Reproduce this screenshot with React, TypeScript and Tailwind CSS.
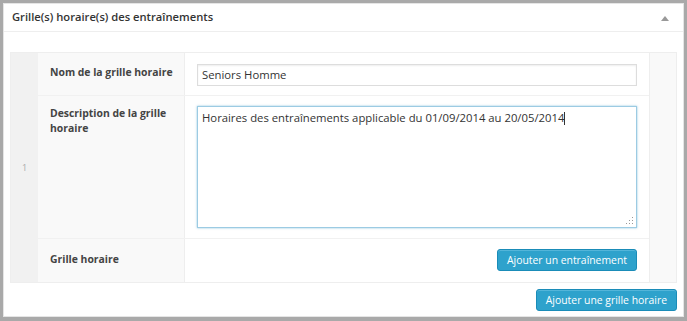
import React from "react";

const font = { fontFamily: '"Open Sans", "Liberation Sans", sans-serif' };

const btn =
  "h-[22px] px-[9px] rounded-[3px] bg-[#2ea2cc] border border-[#1a8cb8] shadow-[inset_0_1px_0_rgba(120,200,230,0.5)] text-white text-[10.4px] leading-none";

export default function App() {
  return (
    <div className="w-[687px] h-[321px] bg-[#a9a9a9] p-[3px] pb-[4px]" style={font}>
      <div className="h-full bg-white border border-[#e5e5e5] flex flex-col text-[#444]">
        <div className="h-[28px] border-b border-[#eeeeee] flex items-center justify-between pl-[8px] pr-[14px]">
          <span className="font-semibold text-[#333] text-[11.2px]">Grille(s) horaire(s) des entraînements</span>
          <svg width="8" height="6" viewBox="0 0 8 6">
            <path d="M0 6 L4 1 L8 6 Z" fill="#999" />
          </svg>
        </div>
        <div className="px-[6px] pt-[20px]">
          <div className="flex border border-[#eeeeee]">
            <div className="w-[27px] bg-[#f1f1f1] flex items-center justify-center text-[9px] text-[#aaa]">1</div>
            <div className="flex-1 flex flex-col">
              <div className="flex h-[43px] border-b border-[#f1f1f1]">
                <div className="w-[147px] bg-[#f9f9f9] border-r border-[#eeeeee] pl-[12px] pt-[12px] font-bold text-[#444] text-[10.4px]">
                  Nom de la grille horaire
                </div>
                <div className="flex-1 px-[12px] pt-[11px]">
                  <div className="h-[22px] border border-[#dddddd] shadow-[inset_0_1px_2px_rgba(0,0,0,0.07)] px-[4px] flex items-center text-[11.3px] text-[#333]">
                    Seniors Homme
                  </div>
                </div>
              </div>
              <div className="flex h-[143px] border-b border-[#f1f1f1]">
                <div className="w-[147px] bg-[#f9f9f9] border-r border-[#eeeeee] pl-[12px] pt-[10px] pr-[8px] font-bold text-[#444] text-[10.4px] leading-[15px]">
                  Description de la grille horaire
                </div>
                <div className="flex-1 px-[12px] pt-[10px]">
                  <div className="relative h-[122px] border border-[#9ccbe3] shadow-[0_0_2px_rgba(30,140,190,0.5)] px-[4px] pt-[3px] text-[11.3px] text-[#333]">
                    Horaires des entraînements applicable du 01/09/2014 au 20/05/2014
                    <span className="inline-block w-px h-[13px] bg-[#333] align-middle" />
                    <svg className="absolute right-[2px] bottom-[2px]" width="8" height="8" viewBox="0 0 8 8">
                      <rect x="6" y="0" width="1" height="1" fill="#999" />
                      <rect x="3" y="3" width="1" height="1" fill="#999" />
                      <rect x="6" y="3" width="1" height="1" fill="#999" />
                      <rect x="0" y="6" width="1" height="1" fill="#999" />
                      <rect x="3" y="6" width="1" height="1" fill="#999" />
                      <rect x="6" y="6" width="1" height="1" fill="#999" />
                    </svg>
                  </div>
                </div>
              </div>
              <div className="flex h-[43px]">
                <div className="w-[147px] bg-[#f9f9f9] border-r border-[#eeeeee] pl-[12px] pt-[13px] font-bold text-[#444] text-[10.4px]">
                  Grille horaire
                </div>
                <div className="flex-1 px-[12px] pt-[10px] flex justify-end items-start">
                  <button className={btn}>Ajouter un entraînement</button>
                </div>
              </div>
            </div>
            <div className="w-[27px] bg-[#f9f9f9] border-l border-[#eeeeee]" />
          </div>
          <div className="flex justify-end pt-[6px]">
            <button className={btn}>Ajouter une grille horaire</button>
          </div>
        </div>
      </div>
    </div>
  );
}
